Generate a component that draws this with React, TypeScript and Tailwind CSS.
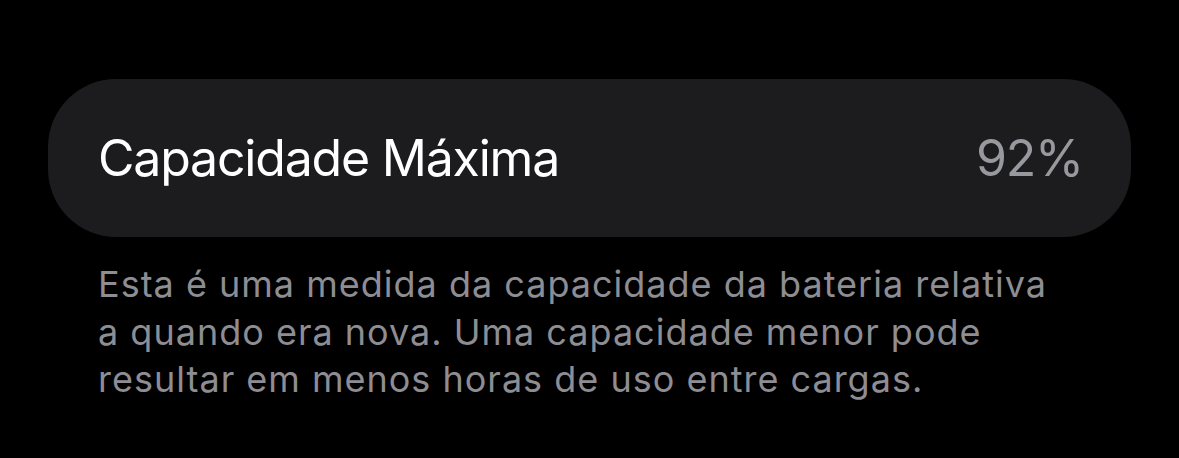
import React from "react";

export default function App() {
  return (
    <div className="w-[1179px] h-[458px] bg-black pt-[79px] px-[48px] font-['Inter',sans-serif]">
      {/* Battery capacity row */}
      <div className="h-[158px] rounded-[68px] bg-[#1c1c1e] flex items-center justify-between pl-[50px] pr-[48px]">
        <span className="text-[50px] tracking-[-1.2px] text-white leading-none">Capacidade Máxima</span>
        <span className="text-[50px] tracking-[-1.2px] text-[#98989f] leading-none">92%</span>
      </div>

      {/* Footnote */}
      <p className="mt-[24px] pl-[50px] text-[36px] tracking-[1px] leading-[47.5px] text-[#8d8d93]">
        Esta é uma medida da capacidade da bateria relativa
        <br />
        a quando era nova. Uma capacidade menor pode
        <br />
        resultar em menos horas de uso entre cargas.
      </p>
    </div>
  );
}
